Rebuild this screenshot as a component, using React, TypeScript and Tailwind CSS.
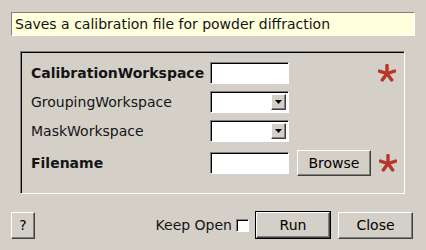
import React from "react";

const sunken =
  "border border-t-[#808080] border-l-[#808080] border-b-white border-r-white shadow-[inset_1px_1px_0_#000]";
const raised =
  "border border-t-white border-l-white border-b-[#404040] border-r-[#404040] shadow-[inset_-1px_-1px_0_#808080] bg-[#d4d0c8]";

const Star = () => (
  <svg width="18" height="18" viewBox="0 0 18 18">
    {[0, 72, 144, 216, 288].map((a) => (
      <line
        key={a}
        x1="9"
        y1="9.5"
        x2="9"
        y2="1.5"
        stroke="#b8352a"
        strokeWidth="3.4"
        strokeLinecap="round"
        transform={`rotate(${a} 9 9.5)`}
      />
    ))}
  </svg>
);

const TextBox = () => <div className={`w-[79px] h-[22px] bg-white ${sunken}`} />;

const Combo = () => (
  <div className={`w-[79px] h-[22px] bg-white ${sunken} flex justify-end items-stretch p-[2px]`}>
    <div className={`w-[15px] ${raised} flex items-center justify-center`}>
      <svg width="7" height="4" viewBox="0 0 7 4">
        <path d="M0 0h7L3.5 4z" fill="#000" />
      </svg>
    </div>
  </div>
);

export default function App() {
  const labelCls = "w-[179px] text-[14px] text-[#141414]";
  return (
    <div
      className="w-[426px] h-[250px] bg-[#d4d0c8] px-[11px] pt-[12px] text-[14px] text-black"
      style={{ fontFamily: '"DejaVu Sans", sans-serif' }}
    >
      <div className="h-[24px] bg-[#ffffdc] border border-t-[#808080] border-l-[#808080] border-b-white border-r-white flex items-center px-[3px] text-[14px] text-[#141414]">
        Saves a calibration file for powder diffraction
      </div>

      <div
        className={`mt-[15px] ml-[9px] mr-[10px] h-[143px] ${sunken} pl-[10px] pt-[10px] flex flex-col`}
      >
        <div className="flex items-center h-[22px]">
          <span className={`${labelCls} font-bold`}>CalibrationWorkspace</span>
          <TextBox />
          <div className="ml-[89px]">
            <Star />
          </div>
        </div>
        <div className="flex items-center h-[22px] mt-[7px]">
          <span className={labelCls}>GroupingWorkspace</span>
          <Combo />
        </div>
        <div className="flex items-center h-[22px] mt-[7px]">
          <span className={labelCls}>MaskWorkspace</span>
          <Combo />
        </div>
        <div className="flex items-center h-[26px] mt-[8px]">
          <span className={`${labelCls} font-bold`}>Filename</span>
          <TextBox />
          <button className={`ml-[8px] w-[74px] h-[26px] ${raised} text-[14px]`}>Browse</button>
          <div className="ml-[8px]">
            <Star />
          </div>
        </div>
      </div>

      <div className="mt-[17px] flex items-center">
        <button className={`w-[24px] h-[27px] ${raised} text-[14px]`}>?</button>
        <div className="flex-1" />
        <span className="text-[14px] text-[#141414]">Keep Open</span>
        <div className={`ml-[4px] w-[13px] h-[13px] bg-white ${sunken}`} />
        <div className="ml-[6px] border border-black">
          <button className={`w-[74px] h-[26px] ${raised} text-[14px]`}>Run</button>
        </div>
        <button className={`ml-[7px] w-[75px] h-[27px] ${raised} text-[14px]`}>Close</button>
        <div className="w-[2px]" />
      </div>
    </div>
  );
}
